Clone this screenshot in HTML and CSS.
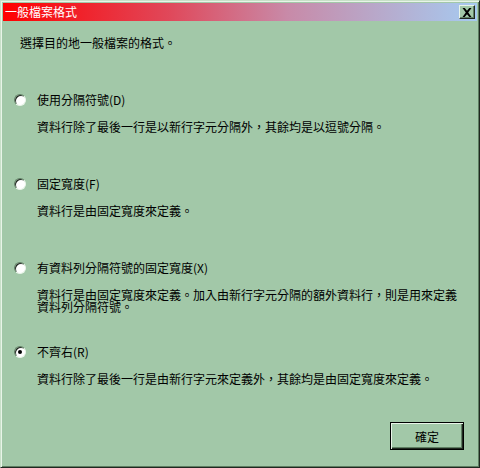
FILE: index.html
```html
<!DOCTYPE html>
<html lang="zh-Hant">
<head>
<meta charset="utf-8">
<title>一般檔案格式</title>
<link rel="stylesheet" href="styles.css">
</head>
<body>
<div class="window">
  <div class="titlebar">
    <span class="title">一般檔案格式</span>
    <button class="close" aria-label="關閉">
      <svg width="10" height="9" viewBox="0 0 10 9"><path d="M0.5 0h2.2l2.3 2.8L7.3 0h2.2L6.2 4.5 9.5 9H7.3L5 6.2 2.7 9H0.5l3.3-4.5z" fill="#000"/></svg>
    </button>
  </div>
  <div class="content">
    <p class="intro">選擇目的地一般檔案的格式。</p>
    <div class="options">
      <div class="option">
        <label class="choice"><span class="radio"></span>使用分隔符號(D)</label>
        <p class="desc">資料行除了最後一行是以新行字元分隔外，其餘均是以逗號分隔。</p>
      </div>
      <div class="option">
        <label class="choice"><span class="radio"></span>固定寬度(F)</label>
        <p class="desc">資料行是由固定寬度來定義。</p>
      </div>
      <div class="option">
        <label class="choice"><span class="radio"></span>有資料列分隔符號的固定寬度(X)</label>
        <p class="desc">資料行是由固定寬度來定義。加入由新行字元分隔的額外資料行，則是用來定義<br>資料列分隔符號。</p>
      </div>
      <div class="option">
        <label class="choice"><span class="radio checked"></span>不齊右(R)</label>
        <p class="desc">資料行除了最後一行是由新行字元來定義外，其餘均是由固定寬度來定義。</p>
      </div>
    </div>
    <div class="footer">
      <button class="ok">確定</button>
    </div>
  </div>
</div>
</body>
</html>
```
FILE: styles.css
```css
html, body {
  margin: 0;
  padding: 0;
}
body {
  width: 480px;
  height: 468px;
  font-family: "Noto Sans CJK TC", "Liberation Sans", sans-serif;
  font-size: 12px;
  color: #000;
  background: #a2c8a8;
}
.window {
  box-sizing: border-box;
  width: 480px;
  height: 468px;
  display: flex;
  flex-direction: column;
  background: #a2c8a8;
  border-style: solid;
  border-width: 1px;
  border-color: #c8e0c8 #202820 #202820 #c8e0c8;
  box-shadow: inset 1px 1px 0 #e8f4e8, inset -1px -1px 0 #5e7e62;
  padding: 2px;
}
.titlebar {
  height: 18px;
  flex: none;
  display: flex;
  align-items: center;
  justify-content: space-between;
  padding: 0 2px 0 2px;
  background: linear-gradient(to right, #ff0000 0%, #e0485a 35%, #c88aa8 60%, #a6caf0 100%);
}
.title {
  color: #fff;
  font-size: 12px;
  line-height: 14px;
}
.close {
  box-sizing: border-box;
  width: 16px;
  height: 14px;
  padding: 0;
  margin: 0;
  display: flex;
  align-items: center;
  justify-content: center;
  background: #a2c8a8;
  border-style: solid;
  border-width: 1px;
  border-color: #e8f4e8 #202820 #202820 #e8f4e8;
  box-shadow: inset -1px -1px 0 #5e7e62;
}
.content {
  flex: 1;
  display: flex;
  flex-direction: column;
  padding: 0 13px 15px 17px;
}
.intro {
  margin: 15px 0 0 0;
  line-height: 14px;
}
.options {
  margin-top: 43px;
  display: flex;
  flex-direction: column;
}
.option {
  height: 84px;
}
.option:last-child {
  height: auto;
}
.choice {
  display: flex;
  align-items: center;
  line-height: 14px;
  height: 14px;
}
.radio {
  box-sizing: border-box;
  width: 12px;
  height: 12px;
  border-radius: 50%;
  background: #fff;
  border: 1px solid;
  border-color: #5e7e62 #e8f4e8 #e8f4e8 #5e7e62;
  box-shadow: inset 1px 1px 0 #202820;
  margin: 0 11px 0 -6px;
  display: flex;
  align-items: center;
  justify-content: center;
  flex: none;
}
.radio.checked::after {
  content: "";
  width: 4px;
  height: 4px;
  border-radius: 50%;
  background: #000;
}
.desc {
  margin: 14px 0 0 17px;
  line-height: 12px;
}
.footer {
  margin-top: auto;
  display: flex;
  justify-content: flex-end;
}
.ok {
  box-sizing: border-box;
  width: 74px;
  height: 28px;
  padding: 0;
  font-family: inherit;
  font-size: 12px;
  color: #000;
  background: #a2c8a8;
  border: 1px solid #000;
  box-shadow: inset 1px 1px 0 #e8f4e8, inset -1px -1px 0 #202820, inset -2px -2px 0 #5e7e62;
}
```
